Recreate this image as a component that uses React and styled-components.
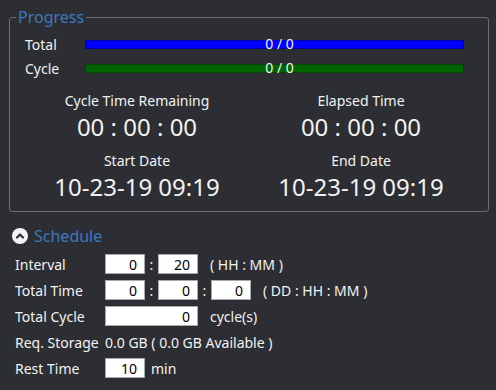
import React from 'react';
import styled, { createGlobalStyle } from 'styled-components';

const GlobalStyle = createGlobalStyle`
  body {
    margin: 0;
    background: #2d2e33;
    color: #f2f2f2;
    font-family: "Noto Sans", "Open Sans", sans-serif;
  }
`;

const Page = styled.div`
  width: 496px;
  height: 390px;
  overflow: hidden;
`;

const Group = styled.fieldset`
  margin: 6px 7px 0 9px;
  padding: 0;
  border: 1px solid #6c6c6c;
  border-radius: 3px;
  min-width: 0;
`;

const Legend = styled.legend`
  margin-left: 6px;
  padding: 0 2px;
  font-size: 16px;
  line-height: 22px;
  color: #3a78bf;
`;

const Bars = styled.div`
  padding: 4px 0 0 15px;
`;

const BarRow = styled.div`
  display: flex;
  align-items: center;
  height: 24px;
`;

const Label = styled.span`
  width: ${(p) => p.$width || 60}px;
  font-size: 14px;
  flex-shrink: 0;
`;

const Track = styled.div`
  width: 379px;
  height: 9px;
  box-sizing: border-box;
  background: ${(p) => p.$color};
  border: 1px solid rgba(0, 0, 0, 0.3);
  display: flex;
  align-items: center;
  justify-content: center;
`;

const TrackText = styled.span`
  font-size: 14px;
  line-height: 1;
  padding-left: 10px;
`;

const Stats = styled.div`
  display: grid;
  grid-template-columns: 224px 224px;
  row-gap: 8px;
  margin: 11px 0 8px 15px;
`;

const Stat = styled.div`
  display: flex;
  flex-direction: column;
  align-items: center;
`;

const StatLabel = styled.div`
  font-size: 14px;
  line-height: 20px;
`;

const StatValue = styled.div`
  font-size: 24px;
  line-height: 32px;
`;

const SectionHeader = styled.div`
  display: flex;
  align-items: center;
  gap: 6px;
  height: 20px;
  margin: 14px 0 8px 12px;
  font-size: 16px;
  color: #3a78bf;
`;

const Form = styled.div`
  display: flex;
  flex-direction: column;
  gap: 6px;
  padding-left: 15px;
`;

const FormRow = styled.div`
  display: flex;
  align-items: center;
  height: 20px;
  font-size: 14px;
`;

const Field = styled.input`
  width: ${(p) => p.$width || 40}px;
  height: 20px;
  box-sizing: border-box;
  margin: 0;
  padding: 0 7px;
  border: 1px solid #a9a9a9;
  background: #fff;
  color: #000;
  text-align: right;
  font-family: "Noto Sans", "Open Sans", sans-serif;
  font-size: 14px;
  outline: none;
`;

const Colon = styled.span`
  width: 13px;
  text-align: center;
`;

const Unit = styled.span`
  margin-left: ${(p) => p.$gap || 12}px;
`;

function CollapseIcon() {
  return (
    <svg width="16" height="16" viewBox="0 0 16 16">
      <circle cx="8" cy="8" r="8" fill="#f2f2f2" />
      <path d="M5 9.5 L8 6.5 L11 9.5" fill="none" stroke="#2d2e33" strokeWidth="2.2" strokeLinecap="round" strokeLinejoin="round" />
    </svg>
  );
}

const stats = [
  ['Cycle Time Remaining', '00 : 00 : 00'],
  ['Elapsed Time', '00 : 00 : 00'],
  ['Start Date', '10-23-19 09:19'],
  ['End Date', '10-23-19 09:19'],
];

export default function App() {
  return (
    <Page>
      <GlobalStyle />
      <Group>
        <Legend>Progress</Legend>
        <Bars>
          <BarRow>
            <Label>Total</Label>
            <Track $color="#0000ff">
              <TrackText>0 / 0</TrackText>
            </Track>
          </BarRow>
          <BarRow>
            <Label>Cycle</Label>
            <Track $color="#006400">
              <TrackText>0 / 0</TrackText>
            </Track>
          </BarRow>
        </Bars>
        <Stats>
          {stats.map(([label, value]) => (
            <Stat key={label}>
              <StatLabel>{label}</StatLabel>
              <StatValue>{value}</StatValue>
            </Stat>
          ))}
        </Stats>
      </Group>

      <SectionHeader>
        <CollapseIcon />
        Schedule
      </SectionHeader>
      <Form>
        <FormRow>
          <Label $width={90}>Interval</Label>
          <Field readOnly value="0" />
          <Colon>:</Colon>
          <Field readOnly value="20" />
          <Unit>( HH : MM )</Unit>
        </FormRow>
        <FormRow>
          <Label $width={90}>Total Time</Label>
          <Field readOnly value="0" />
          <Colon>:</Colon>
          <Field readOnly value="0" />
          <Colon>:</Colon>
          <Field readOnly value="0" />
          <Unit>( DD : HH : MM )</Unit>
        </FormRow>
        <FormRow>
          <Label $width={90}>Total Cycle</Label>
          <Field readOnly value="0" $width={93} />
          <Unit>cycle(s)</Unit>
        </FormRow>
        <FormRow>
          <Label $width={90}>Req. Storage</Label>
          <span>0.0 GB ( 0.0 GB Available )</span>
        </FormRow>
        <FormRow>
          <Label $width={90}>Rest Time</Label>
          <Field readOnly value="10" />
          <Unit $gap={6}>min</Unit>
        </FormRow>
      </Form>
    </Page>
  );
}
